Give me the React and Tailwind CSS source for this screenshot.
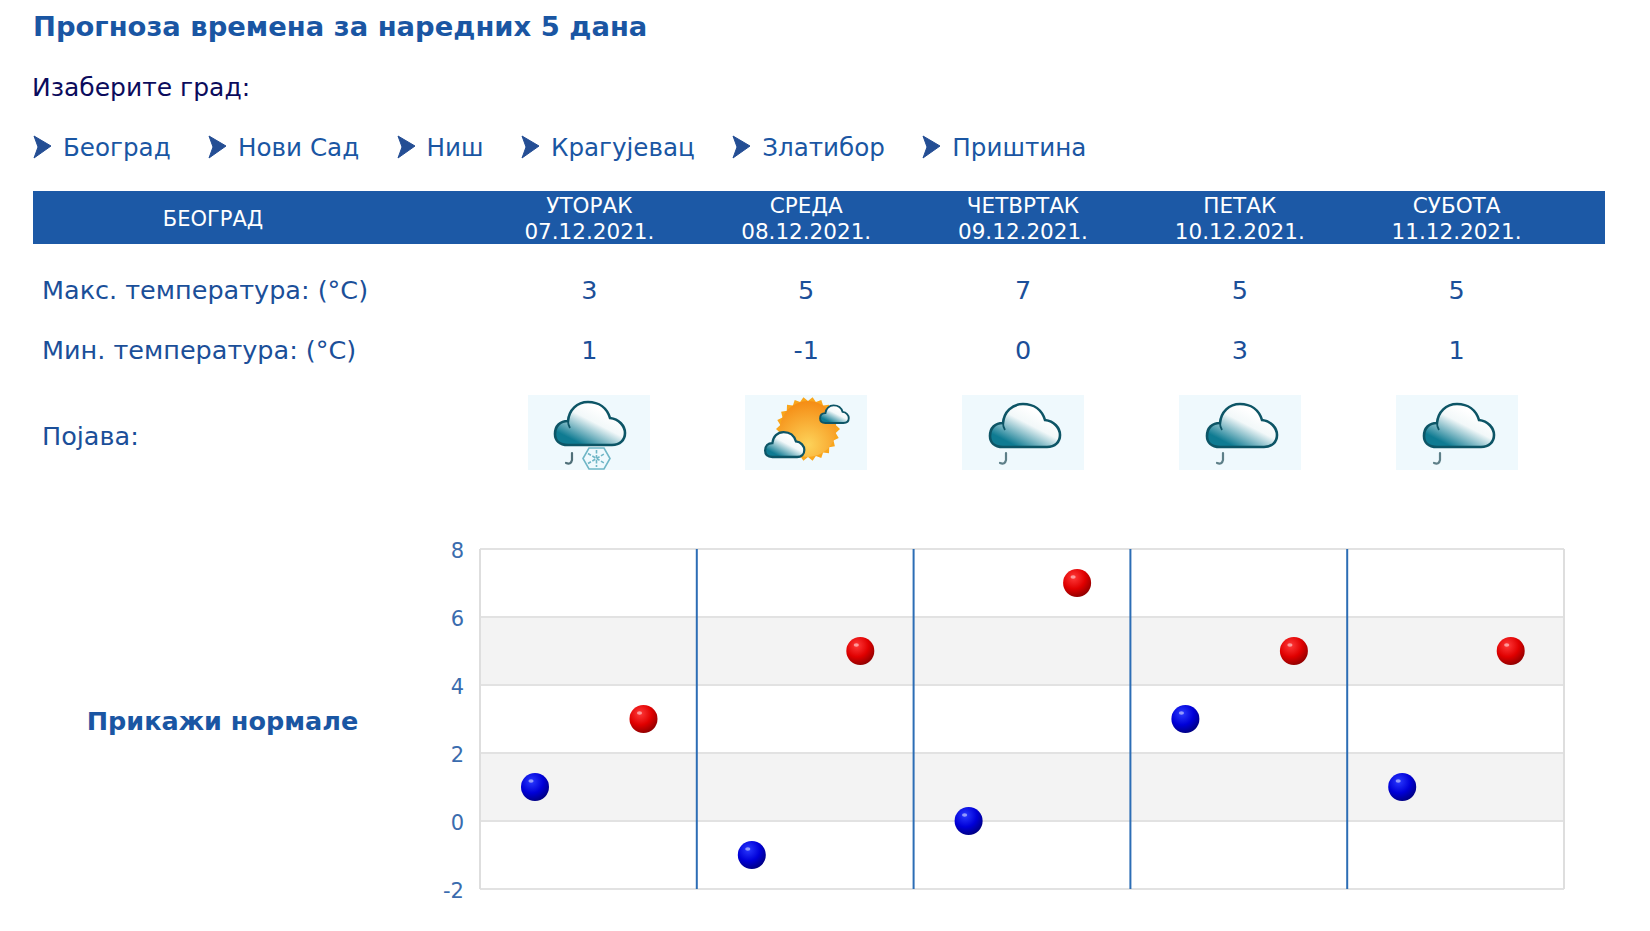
import React from 'react';

const days = [
  { name: 'УТОРАК', date: '07.12.2021.', max: 3, min: 1, icon: 'snow' },
  { name: 'СРЕДА', date: '08.12.2021.', max: 5, min: -1, icon: 'sun' },
  { name: 'ЧЕТВРТАК', date: '09.12.2021.', max: 7, min: 0, icon: 'rain' },
  { name: 'ПЕТАК', date: '10.12.2021.', max: 5, min: 3, icon: 'rain' },
  { name: 'СУБОТА', date: '11.12.2021.', max: 5, min: 1, icon: 'rain' },
];

const cities = ['Београд', 'Нови Сад', 'Ниш', 'Крагујевац', 'Златибор', 'Приштина'];

const CLOUD = 'M40 50 C31 50 27 45 27 39 C27 31 32 26 40 26 C41 15 49 7 60 7 C71 7 79 13 82 23 C91 24 97 31 97 38 C97 45 92 50 84 50 Z';

function Arrow() {
  return (
    <svg width="19" height="24" viewBox="0 0 19 24" className="shrink-0 mr-[11px] -mt-[3px]">
      <path d="M1 1 L18 11 L1 23 L5 12 Z" fill="#123f8c" stroke="#123f8c" strokeWidth="1" strokeLinejoin="round" opacity="0.92" />
    </svg>
  );
}

function CloudDefs({ id }) {
  return (
    <defs>
      <linearGradient id={id} x1="0.72" y1="0.25" x2="0.22" y2="0.85">
        <stop offset="0" stopColor="#ffffff" />
        <stop offset="0.35" stopColor="#f2f8f9" />
        <stop offset="1" stopColor="#0f7b92" />
      </linearGradient>
    </defs>
  );
}

function sunRays(cx, cy, rOuter, rInner, n) {
  const pts = [];
  for (let i = 0; i < n * 2; i++) {
    const r = i % 2 ? rInner : rOuter;
    const a = (Math.PI * i) / n;
    pts.push((cx + r * Math.cos(a)).toFixed(1) + ',' + (cy + r * Math.sin(a)).toFixed(1));
  }
  return pts.join(' ');
}

function WeatherIcon({ kind, id }) {
  return (
    <div className="w-[122px] h-[75px] bg-[#eff9fd]">
      <svg width="122" height="75" viewBox="0 0 122 75">
        <CloudDefs id={id} />
        {kind === 'sun' && (
          <>
            <defs>
              <radialGradient id={id + 's'} cx="0.5" cy="0.78" r="0.8">
                <stop offset="0" stopColor="#fdd35a" />
                <stop offset="1" stopColor="#f58a12" />
              </radialGradient>
            </defs>
            <polygon points={sunRays(63, 34, 32, 28, 22)} fill="#f9a61c" />
            <circle cx="63" cy="34" r="28" fill={'url(#' + id + 's)'} />
            <path transform="translate(5 33) scale(0.56 0.58)" d={CLOUD} fill={'url(#' + id + ')'} stroke="#0d5566" strokeWidth="4" />
            <path transform="translate(64 7.5) scale(0.41)" d={CLOUD} fill={'url(#' + id + ')'} stroke="#0d5566" strokeWidth="4.6" />
          </>
        )}
        {kind === 'snow' && (
          <>
            <path d={CLOUD} fill={'url(#' + id + ')'} stroke="#0d5566" strokeWidth="2.6" />
            <path d="M40 26 Q40 30 42 33" fill="none" stroke="#0d5566" strokeWidth="1.8" />
            <path d="M44 58 L44 65 Q43 70 38 68" fill="none" stroke="#4f6f78" strokeWidth="2.2" strokeLinecap="round" />
            <g fill="none" stroke="#6fb6c6" strokeWidth="1.6">
              <polygon points="55,63.5 61,53 76,53 82,63.5 76,74 61,74" />
              <path d="M68.5 55 L68.5 72 M60 58.5 L77 68.5 M60 68.5 L77 58.5" strokeDasharray="3.4 1.6" />
            </g>
          </>
        )}
        {kind === 'rain' && (
          <g transform="translate(1 2)">
            <path d={CLOUD} fill={'url(#' + id + ')'} stroke="#0d5566" strokeWidth="2.6" />
            <path d="M40 26 Q40 30 42 33" fill="none" stroke="#0d5566" strokeWidth="1.8" />
            <path d="M43 56 L43 63 Q42 68 37 66" fill="none" stroke="#5d7f88" strokeWidth="2.2" strokeLinecap="round" />
          </g>
        )}
      </svg>
    </div>
  );
}

function Ball({ cx, cy, color }) {
  return (
    <g>
      <circle cx={cx} cy={cy} r="14" fill={'url(#ball-' + color + ')'} />
      <ellipse cx={cx - 4} cy={cy - 6} rx="2.6" ry="1.8" fill="#ffffff" opacity="0.5" />
    </g>
  );
}

function Chart() {
  const left = 40;
  const top = 10;
  const step = 34;
  const colW = 216.8;
  const y = (v) => top + (8 - v) * step;
  const ticks = [8, 6, 4, 2, 0, -2];
  return (
    <svg width="1130" height="374" viewBox="0 0 1130 374" className="block">
      <defs>
        <radialGradient id="ball-red" cx="0.38" cy="0.3" r="0.75">
          <stop offset="0" stopColor="#ff3a3a" />
          <stop offset="0.55" stopColor="#e00000" />
          <stop offset="1" stopColor="#8a0000" />
        </radialGradient>
        <radialGradient id="ball-blue" cx="0.38" cy="0.3" r="0.75">
          <stop offset="0" stopColor="#2a3aff" />
          <stop offset="0.55" stopColor="#0000d8" />
          <stop offset="1" stopColor="#00007c" />
        </radialGradient>
      </defs>
      <rect x={left} y={y(6)} width={colW * 5} height={step * 2} fill="#f3f3f3" />
      <rect x={left} y={y(2)} width={colW * 5} height={step * 2} fill="#f3f3f3" />
      {ticks.map((t) => (
        <line key={t} x1={left} x2={left + colW * 5} y1={y(t)} y2={y(t)} stroke="#e2e2e2" strokeWidth="2" />
      ))}
      <line x1={left} x2={left} y1={top} y2={y(-2)} stroke="#dedede" strokeWidth="2" />
      <line x1={left + colW * 5} x2={left + colW * 5} y1={top} y2={y(-2)} stroke="#dedede" strokeWidth="2" />
      {[1, 2, 3, 4].map((i) => (
        <line key={i} x1={left + colW * i} x2={left + colW * i} y1={top} y2={y(-2)} stroke="#2c6db5" strokeWidth="2" />
      ))}
      {ticks.map((t) => (
        <text key={t} x={left - 16} y={y(t) + 9} textAnchor="end" fontSize="21" fill="#3a6cae" fontFamily="'DejaVu Sans', sans-serif">{t}</text>
      ))}
      {days.map((d, i) => (
        <g key={d.date}>
          <Ball cx={left + colW * i + 55} cy={y(d.min)} color="blue" />
          <Ball cx={left + colW * i + 163.5} cy={y(d.max)} color="red" />
        </g>
      ))}
    </svg>
  );
}

export default function App() {
  return (
    <div className="w-[1650px] h-[931px] overflow-hidden bg-white pl-[33px] pr-[45px] font-['DejaVu_Sans',sans-serif] text-[#1b4f99]">
      <h2 className="pt-[9px] h-[58px] text-[27.4px] leading-[36px] font-bold text-[#1a56a3]">Прогноза времена за наредних 5 дана</h2>
      <p className="h-[60px] pt-[13px] -ml-[1px] text-[25px] leading-[34px] text-[#0b0b5c]">Изаберите град:</p>
      <div className="flex items-center h-[61px] mb-[12px] text-[24.6px] text-[#1a56a3]">
        {cities.map((c) => (
          <a key={c} className="flex items-center mr-[37.4px]">
            <Arrow />
            {c}
          </a>
        ))}
      </div>

      <div className="grid grid-cols-[448px_repeat(5,216.8px)_1fr] h-[53px] bg-[#1c59a6] text-white text-[21.5px] leading-[26px] text-center">
        <div className="self-center pr-[88px] pt-[2px] text-[21px]">БЕОГРАД</div>
        {days.map((d) => (
          <div key={d.date} className="pt-[2px]">
            <div>{d.name}</div>
            <div>{d.date}</div>
          </div>
        ))}
      </div>

      <div className="grid grid-cols-[448px_repeat(5,216.8px)_1fr] text-[25.5px] items-center mt-[16px]">
        <div className="h-[60px] leading-[60px] pl-[9px]">Макс. температура: (°C)</div>
        {days.map((d) => <div key={d.date} className="text-center">{d.max}</div>)}
        <div />
        <div className="h-[60px] leading-[60px] pl-[9px]">Мин. температура: (°C)</div>
        {days.map((d) => <div key={d.date} className="text-center">{d.min}</div>)}
        <div />
        <div className="pl-[9px] pt-[8px] mt-[15px]">Појава:</div>
        {days.map((d, i) => (
          <div key={d.date} className="flex justify-center mt-[15px]"><WeatherIcon kind={d.icon} id={'c' + i} /></div>
        ))}
      </div>

      <div className="flex mt-[69px]">
        <div className="w-[407px] h-[374px] flex items-center justify-center pr-[28px] pb-[10px] text-[25.5px] font-bold text-[#1a56a3]">Прикажи нормале</div>
        <Chart />
      </div>
    </div>
  );
}
